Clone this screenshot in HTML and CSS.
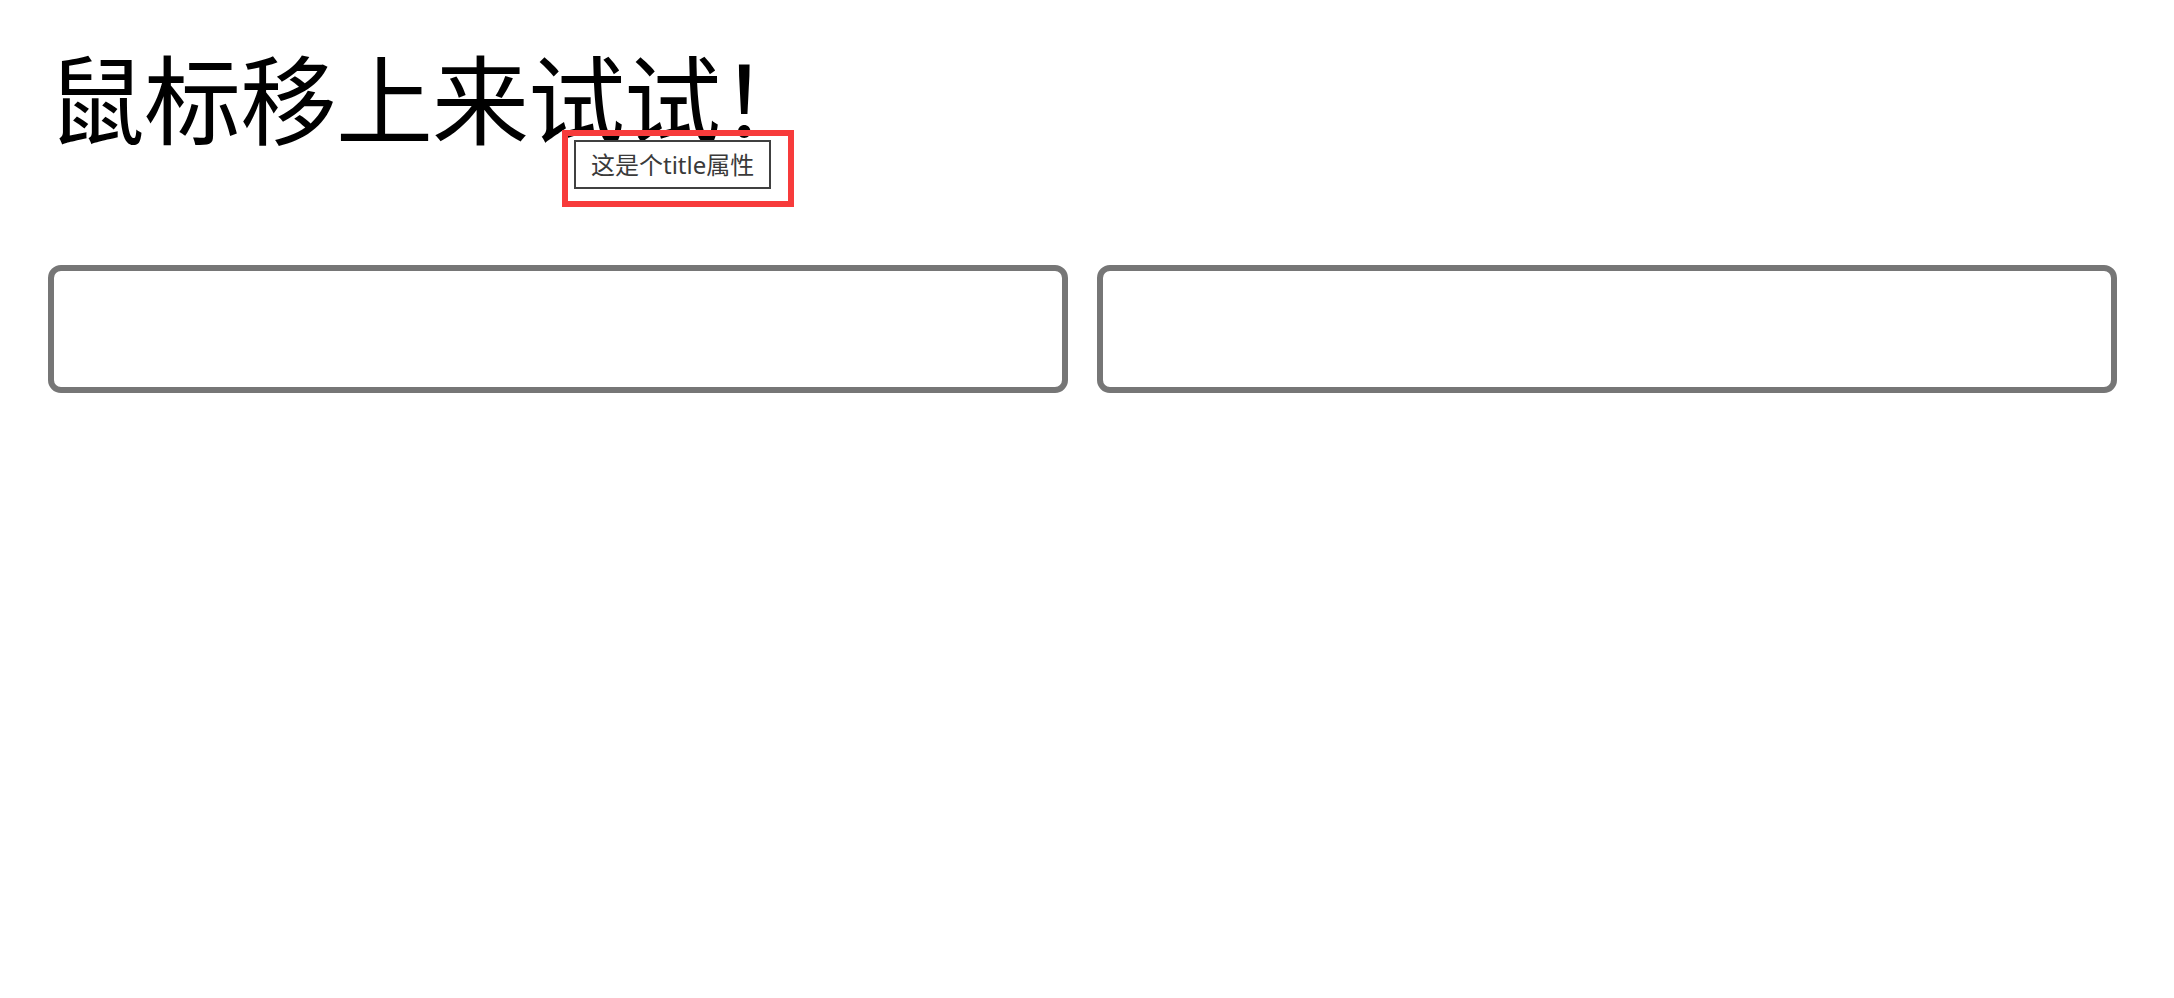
FILE: index.html
```html
<!DOCTYPE html>
<html lang="zh-CN">
<head>
<meta charset="utf-8">
<title>title</title>
<link rel="stylesheet" href="styles.css">
</head>
<body>
<div class="page">
  <h1 class="heading" title="这是个title属性">鼠标移上来试试！</h1>
  <div class="fields">
    <div class="field"></div>
    <div class="field"></div>
  </div>
</div>
<div class="annot"></div>
<div class="tip">这是个title属性</div>
</body>
</html>
```

FILE: styles.css
```css
html, body {
  margin: 0;
  padding: 0;
  background: #ffffff;
}
.page {
  padding: 0 57px 0 48px;
  display: flex;
  flex-direction: column;
}
.heading {
  margin: 46px 0 122px;
  font-family: "Noto Sans CJK SC", "Noto Sans", sans-serif;
  font-weight: normal;
  font-size: 97px;
  line-height: 1;
  color: #000;
  letter-spacing: -1px;
}
.fields {
  display: flex;
  gap: 29px;
}
.field {
  width: 1020px;
  height: 128px;
  box-sizing: border-box;
  border: 6px solid #767676;
  border-radius: 13px;
  background: #fff;
}
.annot {
  position: absolute;
  left: 562px;
  top: 130px;
  width: 232px;
  height: 77px;
  box-sizing: border-box;
  border: 6px solid #f73b3b;
}
.tip {
  position: absolute;
  left: 574px;
  top: 140px;
  width: 197px;
  height: 49px;
  box-sizing: border-box;
  border: 2px solid #404040;
  background: #fff;
  padding-left: 15px;
  font-family: "Noto Sans", "Noto Sans CJK SC", sans-serif;
  font-size: 24px;
  line-height: 45px;
  color: #3a3a3a;
  white-space: nowrap;
}
```
